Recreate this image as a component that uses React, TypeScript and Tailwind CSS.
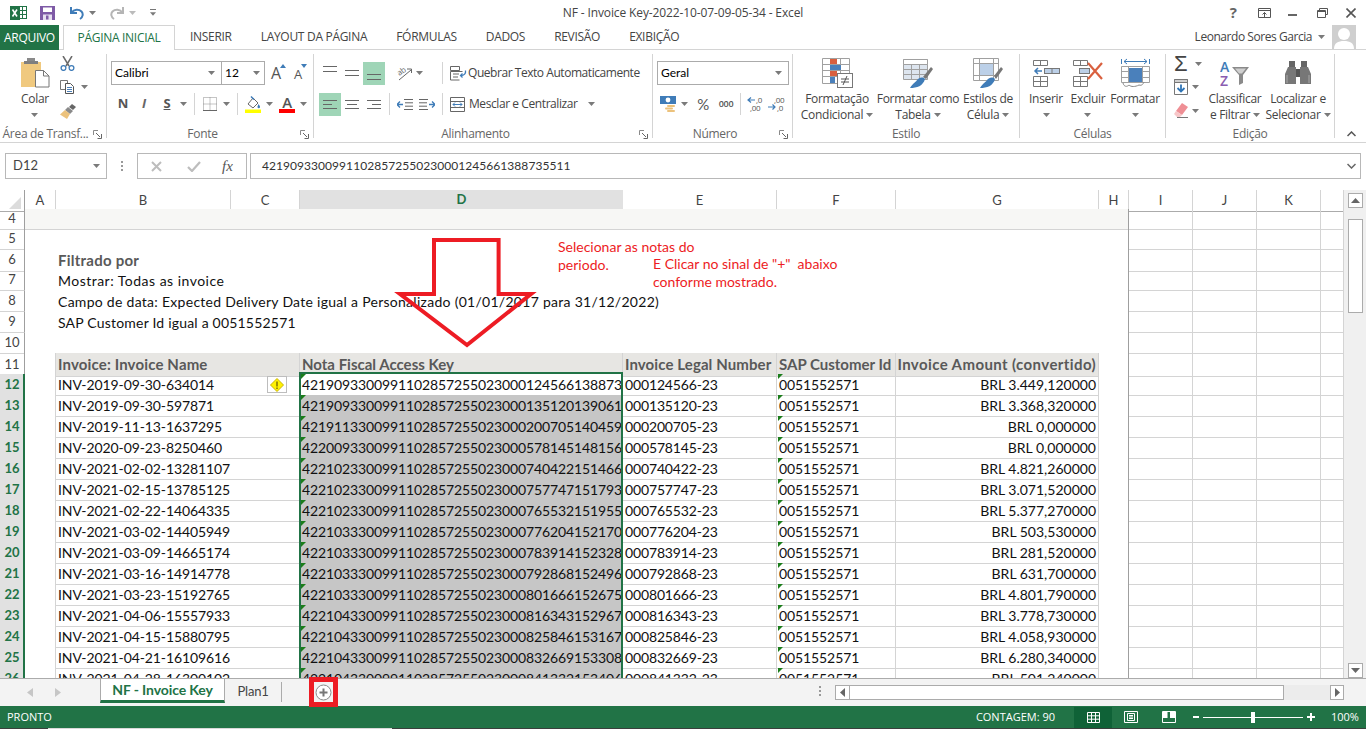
import type { ReactNode } from 'react';

const KEYS: [number, string, string, string, string][] = [
  [12, 'INV-2019-09-30-634014', '4219093300991102857255023000124566138873', '000124566-23', 'BRL 3.449,120000'],
  [13, 'INV-2019-09-30-597871', '4219093300991102857255023000135120139061', '000135120-23', 'BRL 3.368,320000'],
  [14, 'INV-2019-11-13-1637295', '4219113300991102857255023000200705140459', '000200705-23', 'BRL 0,000000'],
  [15, 'INV-2020-09-23-8250460', '4220093300991102857255023000578145148156', '000578145-23', 'BRL 0,000000'],
  [16, 'INV-2021-02-02-13281107', '4221023300991102857255023000740422151466', '000740422-23', 'BRL 4.821,260000'],
  [17, 'INV-2021-02-15-13785125', '4221023300991102857255023000757747151793', '000757747-23', 'BRL 3.071,520000'],
  [18, 'INV-2021-02-22-14064335', '4221023300991102857255023000765532151955', '000765532-23', 'BRL 5.377,270000'],
  [19, 'INV-2021-03-02-14405949', '4221033300991102857255023000776204152170', '000776204-23', 'BRL 503,530000'],
  [20, 'INV-2021-03-09-14665174', '4221033300991102857255023000783914152328', '000783914-23', 'BRL 281,520000'],
  [21, 'INV-2021-03-16-14914778', '4221033300991102857255023000792868152496', '000792868-23', 'BRL 631,700000'],
  [22, 'INV-2021-03-23-15192765', '4221033300991102857255023000801666152675', '000801666-23', 'BRL 4.801,790000'],
  [23, 'INV-2021-04-06-15557933', '4221043300991102857255023000816343152967', '000816343-23', 'BRL 3.778,730000'],
  [24, 'INV-2021-04-15-15880795', '4221043300991102857255023000825846153167', '000825846-23', 'BRL 4.058,930000'],
  [25, 'INV-2021-04-21-16109616', '4221043300991102857255023000832669153308', '000832669-23', 'BRL 6.280,340000'],
  [26, 'INV-2021-04-28-16300102', '4221043300991102857255023000841332153406', '000841332-23', 'BRL 501,240000'],
];

const GRID = 'grid grid-cols-[25px_31px_175px_69px_323px_154px_119px_203px_30px_64px_64px_64px_23px]';

function Caret({ className = '' }: { className?: string }) {
  return (
    <svg width="7" height="4" viewBox="0 0 7 4" className={`shrink-0 ${className}`}>
      <path d="M0 0h7L3.5 4z" fill="#7a7a7a" />
    </svg>
  );
}

function Sep({ className = '' }: { className?: string }) {
  return <div className={`w-px h-[22px] bg-[#d4d4d4] shrink-0 ${className}`} />;
}

function Launcher() {
  return (
    <svg width="9" height="9" viewBox="0 0 9 9" className="absolute right-[4px] bottom-[-1px]">
      <path d="M.5 5V.5H5" fill="none" stroke="#8a8a8a" />
      <path d="M3 3l4 4M8.5 4v4.500H4.500" fill="none" stroke="#666" />
    </svg>
  );
}

function Lines({ rows, w = 14, h = 14, color = '#666' }: { rows: [number, number, number][]; w?: number; h?: number; color?: string }) {
  return (
    <svg width={w} height={h} viewBox={`0 0 ${w} ${h}`} className="shrink-0">
      {rows.map(([y, x1, x2]) => (
        <path key={y} d={`M${x1} ${y + 0.5}H${x2}`} stroke={color} />
      ))}
    </svg>
  );
}

function ExcelLogo() {
  return (
    <svg width="17" height="14" viewBox="0 0 17 14" className="shrink-0">
      <rect x="9" y=".5" width="7.500" height="12" fill="#fff" stroke="#217346" />
      <path d="M9 4.500h7.500M9 8.500h7.500M12.500 0v13" stroke="#217346" />
      <rect x="0" y="0" width="10" height="14" fill="#217346" />
      <path d="M2.500 3.500l4.500 7M7 3.500l-4.500 7" stroke="#fff" strokeWidth="1.600" />
    </svg>
  );
}

function SaveIcon() {
  return (
    <svg width="15" height="14" viewBox="0 0 15 14" className="shrink-0">
      <path d="M0 0h15v14H0z" fill="#7e5aa6" />
      <rect x="3" y="1.500" width="9" height="4.500" fill="#fff" />
      <rect x="3" y="8.500" width="9" height="5.500" fill="#e6dff0" />
      <rect x="6" y="9.500" width="2.500" height="4" fill="#7e5aa6" />
    </svg>
  );
}

function UndoIcon({ color, flip = false }: { color: string; flip?: boolean }) {
  return (
    <svg width="14" height="14" viewBox="0 0 14 14" className={`shrink-0 ${flip ? '-scale-x-100' : ''}`}>
      <path d="M1 1v6h6" fill="none" stroke={color} strokeWidth="2" />
      <path d="M1.500 6.500C4 3 9 3 11.500 5.500c2 2.200 1.500 5.500-1.500 7.500" fill="none" stroke={color} strokeWidth="2" />
    </svg>
  );
}

function PasteIcon() {
  return (
    <svg width="29" height="30" viewBox="0 0 29 30">
      <rect x="0" y="4" width="20" height="25" fill="#f0c97f" />
      <rect x="6" y="0" width="8" height="4" fill="#8a8a8a" />
      <rect x="3" y="3" width="14" height="3" fill="#7f7f7f" />
      <path d="M14.500 12.500h8l5.500 5.500v11h-13.500z" fill="#fff" stroke="#777" />
      <path d="M22.500 12.500v5.500H28" fill="none" stroke="#777" />
    </svg>
  );
}

function ScissorsIcon() {
  return (
    <svg width="15" height="15" viewBox="0 0 15 15">
      <path d="M3 0l6 10M12 0L6 10" stroke="#6a6a6a" strokeWidth="1.500" />
      <circle cx="3.500" cy="12" r="2.400" fill="none" stroke="#3f7cb8" strokeWidth="1.300" />
      <circle cx="11.500" cy="12" r="2.400" fill="none" stroke="#3f7cb8" strokeWidth="1.300" />
    </svg>
  );
}

function CopyIcon() {
  return (
    <svg width="15" height="14" viewBox="0 0 15 14">
      <path d="M.5.500h7v9h-7z" fill="#fff" stroke="#777" />
      <path d="M5.500 3.500h5l3 3v7h-8z" fill="#fff" stroke="#555" />
      <path d="M7 7.500h5M7 9.500h5M7 11.500h5" stroke="#4b7fb8" />
    </svg>
  );
}

function BrushIcon() {
  return (
    <svg width="16" height="15" viewBox="0 0 16 15">
      <path d="M9 3l3-3 4 3-3 3z" fill="#666" />
      <path d="M8 3l5 4-3 3-5-4z" fill="#8a8a8a" />
      <path d="M5 6l5 4-3 5-7-4.500z" fill="#ecc27c" />
    </svg>
  );
}

function BorderIcon() {
  return (
    <svg width="14" height="14" viewBox="0 0 14 14">
      <path d="M.5.500h13v13H.500zM7 .500v13M.500 7h13" fill="none" stroke="#8a8a8a" strokeDasharray="1 1" />
      <path d="M0 13.500h14" stroke="#666" />
    </svg>
  );
}

function FillIcon() {
  return (
    <svg width="16" height="18" viewBox="0 0 16 18">
      <path d="M3 9l5-6 5 5-5 5z" fill="#fff" stroke="#666" />
      <path d="M6 1.500l3 3" stroke="#3f7cb8" strokeWidth="1.500" />
      <path d="M13.500 9c1 1.500 1.500 2 1.500 3a1.200 1.200 0 01-2.500 0c0-1 .5-1.500 1-3z" fill="#3f7cb8" />
      <rect x="0" y="14.500" width="16" height="3.500" fill="#ffff00" />
    </svg>
  );
}

function OrientIcon() {
  return (
    <svg width="16" height="16" viewBox="0 0 16 16" className="overflow-visible">
      <text x="1" y="9" fontSize="8" fill="#666" transform="rotate(-35 5 8)" fontFamily="Open Sans">ab</text>
      <path d="M2 15L14 5M10 4h4.500v4" fill="none" stroke="#666" />
    </svg>
  );
}

function IndentIcon({ flip = false }: { flip?: boolean }) {
  return (
    <svg width="16" height="11" viewBox="0 0 16 11" className={flip ? '-scale-x-100' : ''}>
      <path d="M7 .500h9M8 3.800h8M8 7.200h8M7 10.500h9" stroke="#666" />
      <path d="M0 5.500h6M3 2.500l-3 3 3 3" fill="none" stroke="#3f7cb8" strokeWidth="1.300" />
    </svg>
  );
}

function WrapIcon() {
  return (
    <svg width="17" height="15" viewBox="0 0 17 15">
      <path d="M.5.500h9v4h-9zM.5 5.500h12M.5 5.500v8.500h9" fill="none" stroke="#666" />
      <path d="M3 8h6M3 11h5" stroke="#666" />
      <path d="M15.500 4.500c.5 3-1 5-5 5M12.500 7.500l-2 2 2 2" fill="none" stroke="#3f7cb8" strokeWidth="1.300" />
    </svg>
  );
}

function MergeIcon() {
  return (
    <svg width="15" height="15" viewBox="0 0 15 15">
      <path d="M.5.500h14v14H.500zM.500 4.500h14M.500 10.500h14" fill="none" stroke="#666" />
      <path d="M3 7.500h9M5 5.500l-2 2 2 2M10 5.500l2 2-2 2" fill="none" stroke="#3f7cb8" />
    </svg>
  );
}

function CurrencyIcon() {
  return (
    <svg width="16" height="16" viewBox="0 0 16 16">
      <rect x="0" y="0" width="16" height="8" fill="#3f7cb8" />
      <circle cx="8" cy="4" r="2.400" fill="#fff" />
      <rect x="7" y="9" width="8" height="2" rx="1" fill="#ecc27c" />
      <rect x="5" y="11.500" width="8" height="2" rx="1" fill="#ecc27c" />
      <rect x="7" y="14" width="8" height="2" rx="1" fill="#ecc27c" />
    </svg>
  );
}

function DecimalIcon({ top, bottom, up }: { top: string; bottom: string; up: boolean }) {
  return (
    <svg width="18" height="16" viewBox="0 0 18 16">
      <text x={up ? 9 : 6} y="7" fontSize="8" fill="#555" fontFamily="Open Sans">{top}</text>
      <text x={up ? 3 : 9} y="15" fontSize="8" fill="#555" fontFamily="Open Sans">{bottom}</text>
      {up ? (
        <path d="M1 4h7M4 1.500L1 4l3 2.500" fill="none" stroke="#3f7cb8" strokeWidth="1.200" />
      ) : (
        <path d="M0 11h7M4.500 8.500L7 11l-2.500 2.500" fill="none" stroke="#3f7cb8" strokeWidth="1.200" />
      )}
    </svg>
  );
}

function CondFormatIcon() {
  return (
    <svg width="31" height="30" viewBox="0 0 31 30">
      <path d="M.5.500h27v25H.500zM.500 6.500h27M.500 12.500h27M.500 18.500h27M9.500.500v25M18.500.500v25" fill="#fff" stroke="#a0a0a0" />
      <rect x="8" y="1" width="7" height="5" fill="#d9603f" />
      <rect x="8" y="7" width="11" height="5" fill="#4a80bb" />
      <rect x="8" y="13" width="7" height="5" fill="#d9603f" />
      <rect x="8" y="19" width="5" height="6" fill="#4a80bb" />
      <rect x="15.500" y="15.500" width="15" height="14" fill="#fff" stroke="#777" />
      <path d="M19 21h8M19 24h8M25 18l-4 9" stroke="#555" />
    </svg>
  );
}

function TableIcon() {
  return (
    <svg width="30" height="29" viewBox="0 0 30 29">
      <path d="M.5.500h24v20H.500zM.500 5.500h24M.500 10.500h24M.500 15.500h24M8.500.500v20M16.500.500v20" fill="#dde5ef" stroke="#a0a0a0" />
      <path d="M.5.500h24v5H.500z" fill="#fff" stroke="#a0a0a0" />
      <path d="M20 18l8-10 2 2-7 10z" fill="#777" />
      <path d="M22 20c-3-3-6-1-8 1-1 2-4 3-7 8 7 0 13-2 15-9z" fill="#3f7cb8" />
    </svg>
  );
}

function CellStyleIcon() {
  return (
    <svg width="30" height="30" viewBox="0 0 30 30">
      <path d="M.5.500h25v22H.500zM.500 5.500h25M6.500.500v22M20.500.500v22M.500 17.500h25" fill="#fff" stroke="#a0a0a0" />
      <rect x="7" y="6" width="13" height="11" fill="#bcd0e8" />
      <path d="M21 18l7-9 2 2-7 10z" fill="#777" />
      <path d="M22 21c-3-3-6-1-8 1-1 2-4 3-7 8 7 0 13-2 15-9z" fill="#3f7cb8" />
    </svg>
  );
}

function InsertIcon() {
  return (
    <svg width="27" height="27" viewBox="0 0 27 27">
      <path d="M.5.500h14v5H.500zM7.500.500v5M.500 16.500h14v10H.500zM7.500 16.500v10M.500 21.500h14" fill="none" stroke="#777" />
      <rect x="11.500" y="8.500" width="15" height="5" fill="#bcd0e8" stroke="#777" />
      <path d="M19 8.500v5" stroke="#777" />
      <path d="M2 11h7M5 8l-3 3 3 3" fill="none" stroke="#3f7cb8" strokeWidth="1.500" />
    </svg>
  );
}

function DeleteIcon() {
  return (
    <svg width="31" height="27" viewBox="0 0 31 27">
      <path d="M.5.500h14v5H.500zM7.500.500v5M.500 16.500h14v10H.500zM7.500 16.500v10M.500 21.500h14" fill="none" stroke="#777" />
      <rect x="6.500" y="8.500" width="10" height="5" fill="#bcd0e8" stroke="#777" />
      <path d="M15 3l14 16M29 3L15 19" stroke="#d9603f" strokeWidth="2.200" />
    </svg>
  );
}

function FormatIcon() {
  return (
    <svg width="29" height="30" viewBox="0 0 29 30">
      <path d="M.5 1v5M28.500 1v5M3 3.500h23M6 1L3 3.500 6 6M23 1l3 2.500L23 6" fill="none" stroke="#3f7cb8" />
      <path d="M.5 8.500h28v16H.500zM.500 13.500h28M.500 19.500h28M7.500 8.500v16M21.500 8.500v16" fill="#fff" stroke="#a0a0a0" />
      <rect x="8" y="10" width="13" height="14" fill="#4a80bb" />
      <path d="M2 25c1 4 4 4 6 2 2 2 6 2 10 0 3 1 4-1 5-3" fill="none" stroke="#888" />
    </svg>
  );
}

function FillDownIcon() {
  return (
    <svg width="14" height="16" viewBox="0 0 14 16">
      <path d="M.5.500h13v15H.500z" fill="#fff" stroke="#777" />
      <path d="M.5.500h13v3H.500z" fill="#cfcfcf" stroke="#777" />
      <path d="M7 5.500v7M3.500 9L7 12.500 10.500 9" fill="none" stroke="#2f74b5" strokeWidth="1.800" />
    </svg>
  );
}

function EraserIcon() {
  return (
    <svg width="14" height="15" viewBox="0 0 14 15">
      <path d="M8 0l6 4-6 8-6-4z" fill="#ef8f95" />
      <path d="M2 8l6 4-2 2H3L0 11z" fill="#f7c6c8" />
      <path d="M3 14.500h11" stroke="#777" />
    </svg>
  );
}

function SortIcon() {
  return (
    <svg width="30" height="27" viewBox="0 0 30 27">
      <text x="0" y="12" fontSize="14" fill="#3f7cb8" fontFamily="Open Sans" fontWeight="600">A</text>
      <text x="0" y="26" fontSize="14" fill="#8a5db0" fontFamily="Open Sans" fontWeight="600">Z</text>
      <path d="M12 7h17l-6 8v8l-4 2V15z" fill="#8a8a8a" />
      <path d="M15 8.500h11l-4 5h-3z" fill="#d0d0d0" />
    </svg>
  );
}

function BinocularsIcon() {
  return (
    <svg width="26" height="24" viewBox="0 0 26 24">
      <path d="M4 0h6v6H4zM16 0h6v6h-6z" fill="#666" />
      <path d="M3 6h8v17H0V13zM23 6h-8v17h11V13z" fill="#777" />
      <path d="M11 8h4v8h-4z" fill="#555" />
      <path d="M2 14v8M24 14v8" stroke="#aaa" />
    </svg>
  );
}

function BigButton({ icon, lines, caret, w }: { icon: ReactNode; lines: string[]; caret?: 'inline' | 'below'; w: string }) {
  return (
    <div className={`flex flex-col items-center shrink-0 pt-[4px] ${w}`}>
      <div className="h-[30px] flex items-center justify-center">{icon}</div>
      <div className="mt-[3px] flex flex-col items-center whitespace-nowrap leading-[16px]">
        {lines.map((line, i) => (
          <div key={line} className="flex items-center gap-[3px] h-[16px]">
            {line}
            {caret === 'inline' && i === lines.length - 1 && <Caret />}
          </div>
        ))}
        {caret === 'below' && (
          <div className="h-[16px] flex items-center">
            <Caret />
          </div>
        )}
      </div>
    </div>
  );
}

function Group({ label, width, launcher, children }: { label: string; width: string; launcher?: boolean; children: ReactNode }) {
  return (
    <div className={`${width} h-[84px] mt-[4px] border-r border-[#d4d4d4] flex flex-col relative shrink-0`}>
      <div className="flex-1 flex min-h-0">{children}</div>
      <div className={`h-[16px] -mb-[4px] leading-[16px] text-center text-[#666] whitespace-nowrap ${launcher ? 'pr-[15px]' : ''}`}>{label}</div>
      {launcher && <Launcher />}
    </div>
  );
}

function TitleBar() {
  return (
    <div className="h-[25px] flex items-center shrink-0">
      <div className="w-[200px] flex items-center">
        <div className="ml-[10px]"><ExcelLogo /></div>
        <div className="ml-[13px]"><SaveIcon /></div>
        <div className="ml-[15px]"><UndoIcon color="#3f7cb8" /></div>
        <Caret className="ml-[5px]" />
        <div className="ml-[14px]"><UndoIcon color="#b5b5b5" flip /></div>
        <Caret className="ml-[5px] opacity-50" />
        <div className="ml-[14px] w-[6px] flex flex-col gap-[2px]">
          <div className="h-px bg-[#777]" />
          <Caret className="w-[6px]" />
        </div>
      </div>
      <div className="flex-1 text-center text-[#444] tracking-[-0.12px]">NF - Invoice Key-2022-10-07-09-05-34 - Excel</div>
      <div className="w-[200px] flex items-center justify-end">
        <span className="text-[15px] font-bold text-[#666] mr-[21px] leading-none">?</span>
        <svg width="13" height="10" viewBox="0 0 13 10" className="mr-[17px]">
          <path d="M.5.500h12v9H.500z M.5 2.500h12" fill="none" stroke="#555" />
          <path d="M6.500 9V4.500M4.500 6.500l2-2 2 2" fill="none" stroke="#555" />
        </svg>
        <div className="w-[9px] h-[2px] bg-[#666] mr-[20px] mt-[4px]" />
        <svg width="11" height="10" viewBox="0 0 11 10" className="mr-[18px]">
          <path d="M2.500 2.500V.500h8v6h-2" fill="none" stroke="#555" />
          <path d="M.5 2.500h8v7h-8z M.5 3.500h8" fill="none" stroke="#555" />
        </svg>
        <svg width="10" height="10" viewBox="0 0 10 10" className="mr-[10px]">
          <path d="M.5.500l9 9M9.500.500l-9 9" stroke="#555" strokeWidth="1.600" />
        </svg>
      </div>
    </div>
  );
}

function TabRow() {
  const tabs = ['INSERIR', 'LAYOUT DA PÁGINA', 'FÓRMULAS', 'DADOS', 'REVISÃO', 'EXIBIÇÃO'];
  return (
    <div className="h-[25px] flex border-b border-[#d4d4d4] shrink-0 items-stretch tracking-[-0.3px]">
      <div className="w-[59px] bg-[#217346] text-white flex items-center justify-center -mb-px">ARQUIVO</div>
      <div className="ml-[4px] w-[112px] bg-white border border-b-0 border-[#d4d4d4] text-[#217346] flex items-center justify-center -mb-px">
        PÁGINA INICIAL
      </div>
      <div className="flex items-center ml-[15px] gap-[29px] text-[#444]">
        {tabs.map(tab => (
          <span key={tab}>{tab}</span>
        ))}
      </div>
      <div className="ml-auto flex items-center text-[#444] tracking-[-0.45px]">
        <span>Leonardo Sores Garcia</span>
        <Caret className="ml-[6px]" />
        <div className="ml-[7px] mr-[10px] w-[24px] h-[24px] bg-[#cfcfcf] overflow-hidden">
          <svg width="24" height="24" viewBox="0 0 24 24">
            <circle cx="12" cy="9" r="6" fill="#fff" />
            <path d="M2 24c0-6 4-8 10-8s10 2 10 8z" fill="#fff" />
          </svg>
        </div>
      </div>
    </div>
  );
}

function Ribbon() {
  return (
    <div className="h-[93px] flex border-b border-[#d4d4d4] shrink-0 relative text-[#444] tracking-[-0.3px]">
      <Group label="Área de Transf..." width="w-[107px]" launcher>
        <BigButton icon={<PasteIcon />} lines={['Colar']} caret="below" w="w-[50px] ml-[10px]" />
        <div className="flex flex-col items-start pt-[2px]">
          <div className="h-[15px]"><ScissorsIcon /></div>
          <div className="mt-[9px] h-[14px] flex items-center"><CopyIcon /><Caret className="ml-[6px]" /></div>
          <div className="mt-[10px] h-[15px]"><BrushIcon /></div>
        </div>
      </Group>

      <Group label="Fonte" width="w-[207px]" launcher>
        <div className="flex flex-col pt-[7px]">
          <div className="h-[24px] flex items-center">
            <div className="ml-[4px] w-[111px] h-[24px] border border-[#ababab] flex items-center justify-between pl-[3px] pr-[6px] text-black font-['Lato',sans-serif] text-[12px] tracking-normal">
              Calibri<Caret />
            </div>
            <div className="w-[43px] h-[24px] border border-l-0 border-[#ababab] flex items-center justify-between pl-[3px] pr-[4px] text-black font-['Lato',sans-serif] text-[12px] tracking-normal">
              12<Caret />
            </div>
            <div className="ml-[6px] w-[14px] relative text-[16px] leading-none text-[#555]">
              A
              <svg width="6" height="4" viewBox="0 0 6 4" className="absolute -right-[1px] top-[-1px]"><path d="M0 4l3-4 3 4z" fill="#3f7cb8" /></svg>
            </div>
            <div className="ml-[9px] w-[12px] relative text-[13px] leading-none text-[#555] mt-[2px]">
              A
              <svg width="6" height="4" viewBox="0 0 6 4" className="absolute -right-[1px] top-[-4px]"><path d="M0 0l3 4 3-4z" fill="#3f7cb8" /></svg>
            </div>
          </div>
          <div className="mt-[7px] h-[24px] flex items-center">
            <span className="ml-[9px] w-[14px] text-center font-bold text-[13px] text-[#555]">N</span>
            <span className="ml-[7px] w-[14px] text-center italic font-bold text-[13px] text-[#666]">I</span>
            <span className="ml-[9px] w-[14px] text-center font-bold text-[13px] text-[#555] underline">S</span>
            <Caret className="ml-[6px]" />
            <Sep className="ml-[7px]" />
            <div className="ml-[8px]"><BorderIcon /></div>
            <Caret className="ml-[6px]" />
            <Sep className="ml-[7px]" />
            <div className="ml-[7px]"><FillIcon /></div>
            <Caret className="ml-[5px]" />
            <div className="ml-[6px] w-[16px] flex flex-col items-center">
              <span className="text-[15px] leading-[13px] font-semibold text-[#555]">A</span>
              <div className="w-[16px] h-[4px] bg-[#ff0000]" />
            </div>
            <Caret className="ml-[5px]" />
          </div>
        </div>
      </Group>

      <Group label="Alinhamento" width="w-[339px]" launcher>
        <div className="flex flex-col pt-[7px]">
          <div className="h-[24px] flex items-center">
            <div className="ml-[9px] -mt-[8px]"><Lines rows={[[2, 0, 14], [7, 0, 14]]} h={10} /></div>
            <div className="ml-[8px]"><Lines rows={[[2, 0, 14], [7, 0, 14]]} h={10} /></div>
            <div className="ml-[4px] w-[22px] h-[23px] bg-[#9fd5b7] flex items-end justify-center pb-[4px]">
              <Lines rows={[[2, 0, 14], [7, 0, 14]]} h={9} />
            </div>
            <div className="ml-[12px]"><OrientIcon /></div>
            <Caret className="ml-[3px]" />
            <Sep className="ml-[19px]" />
            <div className="ml-[7px]"><WrapIcon /></div>
            <span className="ml-[1px] whitespace-nowrap tracking-[-0.45px]">Quebrar Texto Automaticamente</span>
          </div>
          <div className="mt-[7px] h-[24px] flex items-center">
            <div className="ml-[5px] w-[22px] h-[23px] bg-[#9fd5b7] flex items-center justify-center">
              <Lines rows={[[2, 0, 14], [6, 0, 9], [10, 0, 14]]} h={13} />
            </div>
            <div className="ml-[4px]"><Lines rows={[[2, 0, 14], [6, 2, 12], [10, 0, 14]]} h={13} /></div>
            <div className="ml-[8px]"><Lines rows={[[2, 0, 14], [6, 5, 14], [10, 0, 14]]} h={13} /></div>
            <Sep className="ml-[8px]" />
            <div className="ml-[7px]"><IndentIcon /></div>
            <div className="ml-[6px]"><IndentIcon flip /></div>
            <Sep className="ml-[7px]" />
            <div className="ml-[7px]"><MergeIcon /></div>
            <span className="ml-[4px] w-[113px] whitespace-nowrap tracking-[-0.42px]">Mesclar e Centralizar</span>
            <Caret className="ml-[6px]" />
          </div>
        </div>
      </Group>

      <Group label="Número" width="w-[140px]" launcher>
        <div className="flex flex-col pt-[7px]">
          <div className="ml-[4px] w-[132px] h-[24px] border border-[#ababab] flex items-center justify-between pl-[3px] pr-[6px] text-black font-['Lato',sans-serif] text-[12px] tracking-normal">
            Geral<Caret />
          </div>
          <div className="mt-[7px] h-[24px] flex items-center">
            <div className="ml-[7px]"><CurrencyIcon /></div>
            <Caret className="ml-[5px]" />
            <span className="ml-[8px] w-[14px] text-center text-[15px] text-[#555] font-['Lato',sans-serif]">%</span>
            <span className="ml-[8px] w-[16px] text-center text-[9px] font-semibold text-[#555]">000</span>
            <Sep className="ml-[6px]" />
            <div className="ml-[6px]"><DecimalIcon top=",0" bottom=",00" up /></div>
            <div className="ml-[3px]"><DecimalIcon top=",00" bottom=",0" up={false} /></div>
          </div>
        </div>
      </Group>

      <Group label="Estilo" width="w-[227px]">
        <div className="w-[2px]" />
        <BigButton icon={<CondFormatIcon />} lines={['Formatação', 'Condicional']} caret="inline" w="w-[84px]" />
        <BigButton icon={<TableIcon />} lines={['Formatar como', 'Tabela']} caret="inline" w="w-[78px]" />
        <BigButton icon={<CellStyleIcon />} lines={['Estilos de', 'Célula']} caret="inline" w="w-[62px]" />
      </Group>

      <Group label="Células" width="w-[146px]">
        <div className="w-[8px]" />
        <BigButton icon={<InsertIcon />} lines={['Inserir']} caret="below" w="w-[36px]" />
        <BigButton icon={<DeleteIcon />} lines={['Excluir']} caret="below" w="w-[48px]" />
        <BigButton icon={<FormatIcon />} lines={['Formatar']} caret="below" w="w-[46px]" />
      </Group>

      <Group label="Edição" width="w-[169px]">
        <div className="w-[40px] ml-[8px] flex flex-col items-start pt-[2px] shrink-0">
          <div className="h-[15px] flex items-center">
            <span className="text-[22px] leading-[15px] text-[#444] w-[15px] font-['Liberation_Sans',sans-serif]">Σ</span>
            <Caret className="ml-[6px]" />
          </div>
          <div className="mt-[8px] h-[16px] flex items-center"><FillDownIcon /><Caret className="ml-[4px]" /></div>
          <div className="mt-[8px] h-[15px] flex items-center"><EraserIcon /><Caret className="ml-[4px]" /></div>
        </div>
        <BigButton icon={<SortIcon />} lines={['Classificar', 'e Filtrar']} caret="inline" w="w-[42px]" />
        <BigButton icon={<BinocularsIcon />} lines={['Localizar e', 'Selecionar']} caret="inline" w="w-[76px] ml-[4px]" />
      </Group>

      <svg width="9" height="6" viewBox="0 0 9 6" className="absolute left-[1347px] top-[81px]">
        <path d="M.5 5l4-4 4 4" fill="none" stroke="#555" strokeWidth="1.500" />
      </svg>
    </div>
  );
}

function FormulaBar() {
  return (
    <div className="h-[47px] flex pt-[10px] shrink-0 text-[#444]">
      <div className="ml-[5px] w-[102px] h-[26px] border border-[#b8b8b8] flex items-center justify-between pl-[7px] pr-[6px]">
        <span className="font-['Lato',sans-serif] text-[13px]">D12</span>
        <Caret />
      </div>
      <div className="w-[30px] h-[26px] flex flex-col items-center justify-center gap-[2px]">
        <div className="w-[2px] h-[2px] bg-[#999]" />
        <div className="w-[2px] h-[2px] bg-[#999]" />
        <div className="w-[2px] h-[2px] bg-[#999]" />
      </div>
      <div className="w-[110px] h-[26px] border border-[#b8b8b8] flex items-center">
        <svg width="11" height="11" viewBox="0 0 11 11" className="ml-[13px]">
          <path d="M1 1l9 9M10 1l-9 9" stroke="#bdbdbd" strokeWidth="2" />
        </svg>
        <svg width="14" height="11" viewBox="0 0 14 11" className="ml-[25px]">
          <path d="M1 6l4 4 8-9" fill="none" stroke="#bdbdbd" strokeWidth="2.200" />
        </svg>
        <span className="ml-[21px] italic font-['Liberation_Serif',serif] text-[15px] text-[#555] leading-none">fx</span>
      </div>
      <div className="ml-[3px] w-[1111px] h-[26px] border border-[#b8b8b8] flex items-center justify-between pl-[11px] pr-[4px]">
        <span className="font-['Lato',sans-serif] text-[12px] tracking-[0.05px] text-[#333]">42190933009911028572550230001245661388735511</span>
        <svg width="9" height="6" viewBox="0 0 9 6">
          <path d="M.5 1l4 4 4-4" fill="none" stroke="#666" strokeWidth="1.500" />
        </svg>
      </div>
    </div>
  );
}

function ColumnHeader() {
  const letters = ['A', 'B', 'C', 'D', 'E', 'F', 'G', 'H', 'I', 'J', 'K', ''];
  return (
    <div className={`${GRID} h-[19px] text-[13px] text-[#444]`}>
      <div className="border-r border-b border-r-[#9f9f9f] border-b-[#ababab] flex items-end justify-end pr-[3px] pb-[2px]">
        <svg width="12" height="12" viewBox="0 0 12 12"><path d="M12 0v12H0z" fill="#dcdcdc" /></svg>
      </div>
      {letters.map(letter =>
        letter === 'D' ? (
          <div key={letter} className="bg-[#e1e1e1] border-b-2 border-[#217346] text-[#217346] font-bold flex items-center justify-center">D</div>
        ) : (
          <div key={letter || 'L'} className="border-r border-b border-r-[#d4d4d4] border-b-[#ababab] flex items-center justify-center">{letter}</div>
        ),
      )}
    </div>
  );
}

function RowNum({ n, selected }: { n: number; selected?: boolean }) {
  return selected ? (
    <div className="bg-[#e1e1e1] border-r-2 border-r-[#217346] border-b border-b-[#c6c6c6] flex items-center justify-center pl-px text-[13px] font-bold text-[#217346]">{n}</div>
  ) : (
    <div className="border-r border-r-[#9f9f9f] border-b border-b-[#d4d4d4] flex items-center justify-center text-[13px] text-[#444]">{n}</div>
  );
}

function EmptyCells() {
  return (
    <>
      <div className="border-r border-b border-[#d4d4d4]" />
      <div className="border-r border-b border-[#d4d4d4]" />
      <div className="border-r border-b border-[#d4d4d4]" />
      <div className="border-r border-b border-[#d4d4d4]" />
    </>
  );
}

function Triangle() {
  return <div className="absolute left-[1px] top-0 w-0 h-0 border-t-[5px] border-t-[#1b7d1b] border-r-[5px] border-r-transparent" />;
}

function InfoRow({ n, height, children, className = '' }: { n: number; height: string; children?: ReactNode; className?: string }) {
  return (
    <div className={`${GRID} ${height}`}>
      <RowNum n={n} />
      <div className={`col-span-8 border-r border-r-[#9f9f9f] pl-[33px] flex items-center whitespace-nowrap text-[#111] ${className}`}>{children}</div>
      <EmptyCells />
    </div>
  );
}

function Sheet() {
  const head = 'bg-[#e7e6e3] border-r border-b border-[#d4d4d4] flex items-center font-bold text-[15px] text-[#595959] whitespace-nowrap';
  return (
    <div className="w-[1344px] h-[488px] overflow-hidden relative font-['Lato',sans-serif] text-[14px] shrink-0 bg-white">
      <ColumnHeader />
      <InfoRow n={4} height="h-[20px]" className="bg-[#f7f7f5] border-b border-b-[#d4d4d4]" />
      <InfoRow n={5} height="h-[20px]" />
      <InfoRow n={6} height="h-[21px]"><span className="font-bold text-[15px] tracking-[0.25px] text-[#595959]">Filtrado por</span></InfoRow>
      <InfoRow n={7} height="h-[21px]"><span className="tracking-[0.48px]">Mostrar: Todas as invoice</span></InfoRow>
      <InfoRow n={8} height="h-[21px]"><span className="tracking-[0.28px]">Campo de data: Expected Delivery Date igual a Personalizado (01/01/2017 para 31/12/2022)</span></InfoRow>
      <InfoRow n={9} height="h-[21px]"><span className="tracking-[0.2px]">SAP Customer Id igual a 0051552571</span></InfoRow>
      <InfoRow n={10} height="h-[20px]" />

      <div className={`${GRID} h-[21px]`}>
        <RowNum n={11} />
        <div className="border-r border-[#d4d4d4]" />
        <div className={`col-span-2 pl-[2px] tracking-[0.15px] ${head}`}>Invoice: Invoice Name</div>
        <div className={`pl-[2px] ${head}`}>Nota Fiscal Access Key</div>
        <div className={`pl-[2px] tracking-[0.1px] overflow-hidden ${head}`}>Invoice Legal Number</div>
        <div className={`pl-[2px] overflow-hidden ${head}`}>SAP Customer Id</div>
        <div className={`pr-[2px] justify-end tracking-[0.4px] ${head}`}>Invoice Amount (convertido)</div>
        <div className="border-r border-r-[#9f9f9f]" />
        <EmptyCells />
      </div>

      {KEYS.map(([n, name, key, legal, amount]) => (
        <div key={n} className={`${GRID} h-[21px] text-[#111]`}>
          <RowNum n={n} selected />
          <div className="border-r border-[#d4d4d4]" />
          <div className="col-span-2 border-r border-b border-[#d4d4d4] pl-[2px] flex items-center whitespace-nowrap relative tracking-[-0.1px]">
            {name}
            {n === 12 && (
              <div className="absolute left-[211px] top-[2px] w-[20px] h-[17px] bg-white border border-[#bdbdbd] flex items-center justify-center">
                <svg width="14" height="14" viewBox="0 0 14 14">
                  <path d="M7 .5L13.500 7 7 13.500.5 7z" fill="#fff200" stroke="#c9b400" />
                  <path d="M7 3.500v5M7 9.500v1.500" stroke="#7a6a00" strokeWidth="1.400" />
                </svg>
              </div>
            )}
          </div>
          <div className={`border-r border-b border-[#b5b5b5] pl-[2px] flex items-center whitespace-nowrap overflow-hidden relative tracking-[-0.12px] ${n === 12 ? 'bg-white' : 'bg-[#c6c6c6]'}`}>
            <Triangle />
            {key}
          </div>
          <div className="border-r border-b border-[#d4d4d4] pl-[2px] flex items-center whitespace-nowrap tracking-[-0.15px]">{legal}</div>
          <div className="border-r border-b border-[#d4d4d4] pl-[2px] flex items-center whitespace-nowrap relative tracking-[-0.1px]">
            <Triangle />
            0051552571
          </div>
          <div className="border-r border-b border-[#d4d4d4] pr-[2px] flex items-center justify-end whitespace-nowrap">{amount}</div>
          <div className="border-r border-r-[#9f9f9f]" />
          <EmptyCells />
        </div>
      ))}

      {/* selection outline */}
      <div className="absolute left-[299px] top-[182px] w-[324px] h-[400px] border-2 border-[#217346]" />

      {/* annotations */}
      <svg width="150" height="125" viewBox="0 0 150 125" className="absolute left-[390px] top-[40px]">
        <path d="M44 10H108.600V64H141L77 115 10 64H44z" fill="none" stroke="#ed1c24" strokeWidth="4" />
      </svg>
      <div className="absolute left-[558px] top-[48px] text-[14px] leading-[18px] text-[#ed1c24] whitespace-nowrap">
        Selecionar as notas do<br />periodo.
      </div>
      <div className="absolute left-[653px] top-[65px] text-[14px] leading-[18px] text-[#ed1c24] whitespace-pre">
        {'E Clicar no sinal de "+"  abaixo\nconforme mostrado.'}
      </div>
    </div>
  );
}

function ScrollBar() {
  return (
    <div className="w-[22px] h-[488px] bg-[#f0f0f0] flex flex-col pl-[4px] shrink-0">
      <div className="mt-[3px] w-[15px] h-[15px] bg-white border border-[#ababab] flex items-center justify-center">
        <svg width="9" height="5" viewBox="0 0 9 5"><path d="M0 5l4.500-5L9 5z" fill="#666" /></svg>
      </div>
      <div className="mt-[11px] w-[15px] h-[94px] bg-white border border-[#ababab]" />
      <div className="flex-1" />
      <div className="w-[15px] h-[15px] bg-white border border-[#ababab] flex items-center justify-center">
        <svg width="9" height="5" viewBox="0 0 9 5"><path d="M0 0l4.500 5L9 0z" fill="#666" /></svg>
      </div>
    </div>
  );
}

function SheetTabs() {
  return (
    <div className="h-[28px] bg-[#f3f3f3] border-t border-[#ababab] flex items-start shrink-0">
      <svg width="6" height="9" viewBox="0 0 6 9" className="ml-[27px] mt-[9px]"><path d="M6 0v9L0 4.500z" fill="#c6c6c6" /></svg>
      <svg width="6" height="9" viewBox="0 0 6 9" className="ml-[22px] mt-[9px]"><path d="M0 0v9l6-4.500z" fill="#c6c6c6" /></svg>
      <div className="ml-[39px] w-[125px] h-[24px] bg-white border-l border-r border-[#ababab] border-b-[3px] border-b-[#217346] flex items-center justify-center text-[#217346] font-bold font-['Lato',sans-serif] text-[14px] tracking-[-0.1px] whitespace-nowrap">
        NF - Invoice Key
      </div>
      <div className="w-[57px] h-[20px] mt-[3px] border-r border-[#ababab] flex items-center justify-center text-[#444] font-['Lato',sans-serif] text-[13px] tracking-[-0.2px]">Plan1</div>
      <div className="ml-[27px] -mt-[2px] relative z-10 w-[29px] h-[30px] border-[5px] border-[#ed1c24] flex items-center justify-center bg-[#f3f3f3]">
        <svg width="17" height="17" viewBox="0 0 17 17" className="shrink-0">
          <circle cx="8.500" cy="8.500" r="7.500" fill="#fff" stroke="#8a8a8a" />
          <path d="M8.500 4.500v8M4.500 8.500h8" stroke="#777" strokeWidth="2" />
        </svg>
      </div>
      <div className="ml-[481px] mt-[7px] w-[2px] flex flex-col gap-[2px]">
        <div className="h-[2px] bg-[#999]" />
        <div className="h-[2px] bg-[#999]" />
        <div className="h-[2px] bg-[#999]" />
      </div>
      <div className="ml-[14px] mt-[6px] flex h-[15px]">
        <div className="w-[15px] border border-[#ababab] bg-white flex items-center justify-center">
          <svg width="5" height="9" viewBox="0 0 5 9"><path d="M5 0v9L0 4.500z" fill="#666" /></svg>
        </div>
        <div className="w-[434px] border-y border-r border-[#ababab] bg-white" />
        <div className="w-[46px] bg-[#ececec]" />
        <div className="w-[14px] border border-[#ababab] bg-white flex items-center justify-center">
          <svg width="5" height="9" viewBox="0 0 5 9"><path d="M0 0v9l5-4.500z" fill="#666" /></svg>
        </div>
      </div>
    </div>
  );
}

function StatusBar() {
  return (
    <>
      <div className="h-[22px] bg-[#217346] text-white text-[11px] flex items-center shrink-0">
        <span className="ml-[7px]">PRONTO</span>
        <span className="ml-auto whitespace-nowrap">CONTAGEM: 90</span>
        <div className="ml-[19px] w-[38px] h-[21px] mt-px bg-[#0f6237] flex items-center justify-center">
          <svg width="13" height="11" viewBox="0 0 13 11">
            <path d="M.5.500h12v10H.500zM.500 3.800h12M.500 7.200h12M4.500.500v10M8.500.500v10" fill="none" stroke="#fff" />
          </svg>
        </div>
        <svg width="14" height="12" viewBox="0 0 14 12" className="ml-[12px]">
          <path d="M.5.500h13v11H.500z" fill="none" stroke="#fff" />
          <path d="M3.500 2.500h7v7h-7zM5 4.500h4M5 6h4M5 7.500h4" fill="none" stroke="#fff" />
        </svg>
        <svg width="14" height="12" viewBox="0 0 14 12" className="ml-[24px]">
          <path d="M.5.500h13v11H.500z" fill="none" stroke="#fff" />
          <path d="M1 1h4.500v6H1zM8 1h5v6H8z" fill="#fff" />
        </svg>
        <div className="ml-[17px] w-[6px] h-[2px] bg-white" />
        <div className="ml-[4px] w-[100px] h-px bg-white relative">
          <div className="absolute left-[48px] top-[-5px] w-[4px] h-[11px] bg-white" />
        </div>
        <svg width="8" height="8" viewBox="0 0 8 8" className="ml-[4px]"><path d="M4 0v8M0 4h8" stroke="#fff" strokeWidth="2" /></svg>
        <span className="ml-[16px] w-[35px]">100%</span>
      </div>
      <div className="h-px bg-[#3a3f3c] shrink-0 flex">
        <div className="ml-[48px] w-[344px] bg-[#d9d9d9]" />
      </div>
    </>
  );
}

export default function App() {
  return (
    <div className="w-[1366px] h-[729px] overflow-hidden flex flex-col bg-white font-['Open_Sans',sans-serif] text-[12px] text-[#444]">
      <TitleBar />
      <TabRow />
      <Ribbon />
      <FormulaBar />
      <div className="flex shrink-0">
        <Sheet />
        <ScrollBar />
      </div>
      <SheetTabs />
      <StatusBar />
    </div>
  );
}
